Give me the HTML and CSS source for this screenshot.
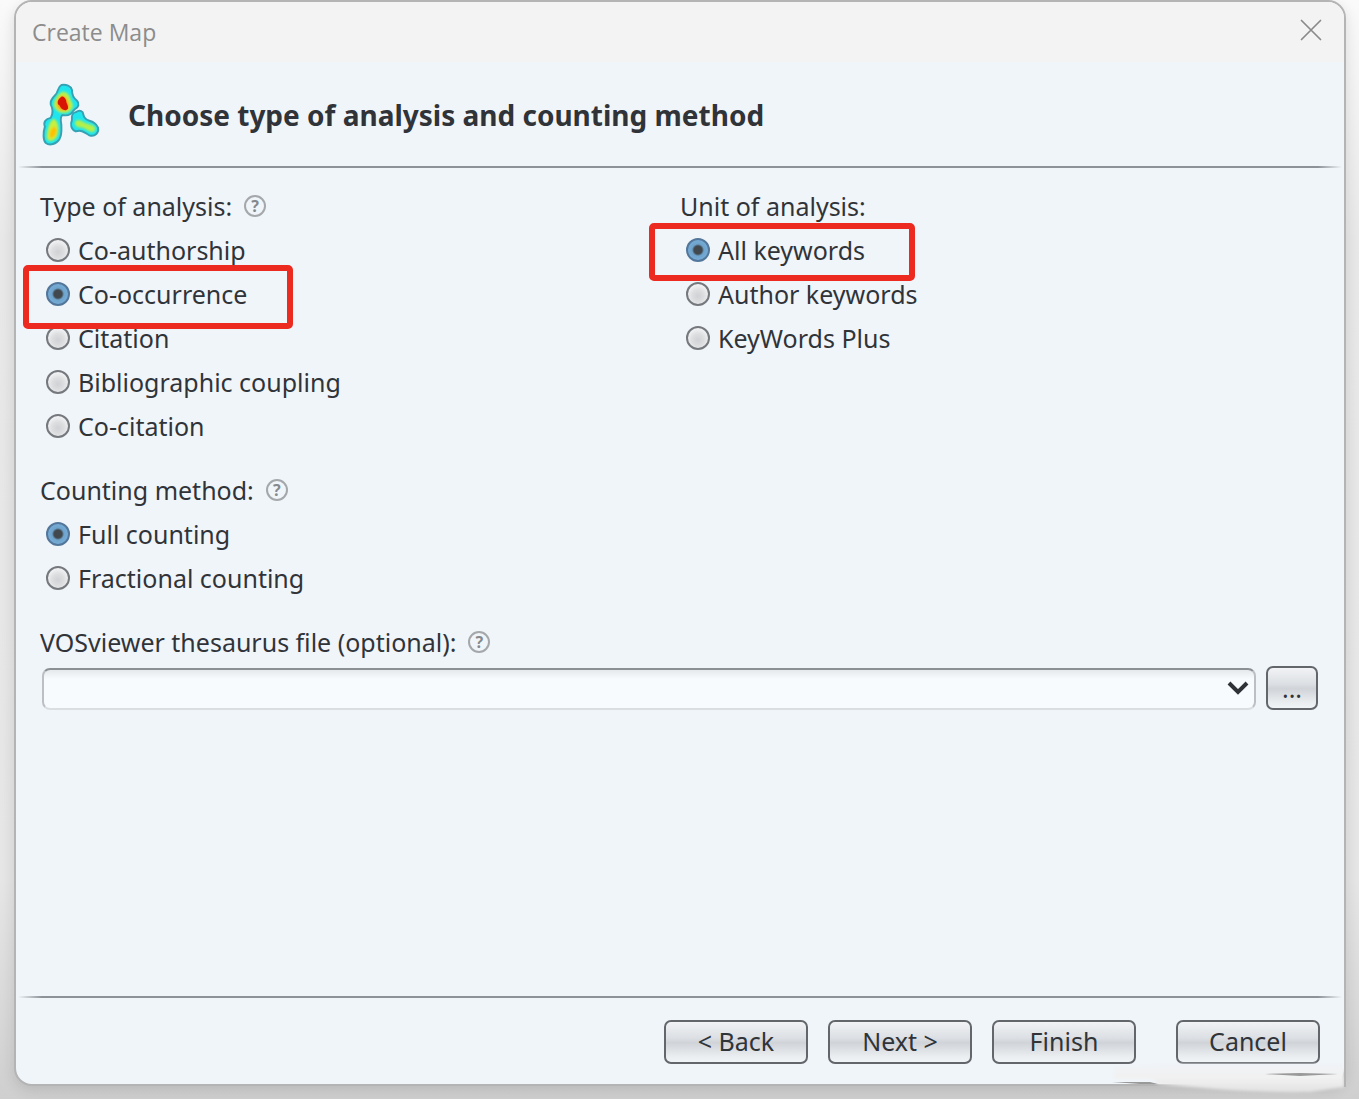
FILE: index.html
```html
<!DOCTYPE html>
<html lang="en">
<head>
    <meta charset="UTF-8">
    <title>Create Map</title>
    <link rel="stylesheet" href="styles.css">
</head>
<body>

    <form class="dialog">
        <div class="titlebar">
            <span class="titlebar__text">Create Map</span>
            <button class="titlebar__close" type="button" aria-label="Close">
                <svg width="22" height="22" viewBox="0 0 22 22" fill="none" stroke="#8a8a8a" stroke-width="1.7" stroke-linecap="round">
                    <path d="M1.5 1.5L20.5 20.5M20.5 1.5L1.5 20.5"/>
                </svg>
            </button>
        </div>

        <header class="header">
            <svg class="header__logo" width="58" height="66" viewBox="0 0 60 66">
                <defs>
                    <filter id="soft" x="-40%" y="-40%" width="180%" height="180%">
                        <feGaussianBlur stdDeviation="1"/>
                    </filter>
                </defs>
                <g fill="#1fe6ee" stroke="#35a2b4" stroke-width="2" stroke-linejoin="round">
                    <path d="M20 2C16 4 17 9 14 12C11 15 8 18 9 22C11 26 12 31 9 36C4 37 1 40 3 45C1 51 1 59 4 62C8 65 15 63 18 58C21 53 20 48 20 43C19 38 19 35 21 33C26 34 30 33 32 29L34 27C38 25 39 21 36 18C33 16 31 12 31 7C30 3 25 1 20 2Z"/>
                    <path d="M35 30C30 31 31 35 31 38C29 43 30 48 35 50C41 48 44 51 49 54C55 56 59 51 58 46C56 42 53 40 49 39C44 38 43 34 42 30C40 28 38 28 35 30Z"/>
                </g>
                <g filter="url(#soft)">
                    <path fill="#b9f04a" d="M21 9C16 11 12 19 12 23C14 29 20 33 27 30C33 27 33 22 30 18C29 13 26 8 21 9Z"/>
                    <path fill="#c8f03c" d="M12 37C7 40 5 50 5 57C7 62 14 60 16 54C18 48 17 39 12 37Z"/>
                    <path fill="#b5f04a" d="M35 39C32 43 36 46 41 46C46 47 49 52 54 50C58 45 52 43 47 42C43 41 39 36 35 39Z"/>
                    <path fill="#ffa000" d="M20 13C15 16 14 22 17 26C22 31 29 28 28 23C27 19 26 13 20 13Z"/>
                    <path fill="#ffc000" d="M10 47C7 51 7 57 10 57C15 55 16 49 14 45Z"/>
                </g>
                <path fill="#d81404" d="M20 14C16 17 15 21 18 23C20 28 25 30 27 26C27 22 25 21 25 18C24 15 22 13 20 14Z"/>
            </svg>
            <h1 class="header__title">Choose type of analysis and counting method</h1>
        </header>

        <main class="content">
            <div class="columns">
                <div class="columns__item">
                    <fieldset class="group">
                        <legend class="group__title">Type of analysis: <button class="help" type="button" aria-label="Help">?</button></legend>
                        <label class="option"><input class="option__radio" type="radio" name="type"> Co-authorship</label>
                        <label class="option option--marked-type"><input class="option__radio" type="radio" name="type" checked> Co-occurrence</label>
                        <label class="option"><input class="option__radio" type="radio" name="type"> Citation</label>
                        <label class="option"><input class="option__radio" type="radio" name="type"> Bibliographic coupling</label>
                        <label class="option"><input class="option__radio" type="radio" name="type"> Co-citation</label>
                    </fieldset>
                    <fieldset class="group">
                        <legend class="group__title">Counting method: <button class="help" type="button" aria-label="Help">?</button></legend>
                        <label class="option"><input class="option__radio" type="radio" name="counting" checked> Full counting</label>
                        <label class="option"><input class="option__radio" type="radio" name="counting"> Fractional counting</label>
                    </fieldset>
                </div>
                <fieldset class="group">
                    <legend class="group__title">Unit of analysis:</legend>
                    <label class="option option--marked-unit"><input class="option__radio" type="radio" name="unit" checked> All keywords</label>
                    <label class="option"><input class="option__radio" type="radio" name="unit"> Author keywords</label>
                    <label class="option"><input class="option__radio" type="radio" name="unit"> KeyWords Plus</label>
                </fieldset>
            </div>

            <div class="group__title">
                <label for="thesaurus">VOSviewer thesaurus file (optional):</label>
                <button class="help" type="button" aria-label="Help">?</button>
            </div>
            <div class="file">
                <div class="file__box">
                    <select class="file__select" id="thesaurus">
                        <option></option>
                    </select>
                    <svg class="file__arrow" width="22" height="16" viewBox="0 0 22 16" fill="none" stroke="#2f3337" stroke-width="4">
                        <path d="M2 3L11 12L20 3"/>
                    </svg>
                </div>
                <button class="button button--browse" type="button" aria-label="Browse">...</button>
            </div>
        </main>

        <footer class="footer">
            <button class="button" type="button">&lt; Back</button>
            <button class="button" type="button">Next &gt;</button>
            <button class="button" type="button">Finish</button>
            <button class="button button--cancel" type="button">Cancel</button>
        </footer>

        <svg class="smudge" width="240" height="36" viewBox="0 0 240 36">
            <defs>
                <linearGradient id="haze" x2="0" y2="1">
                    <stop offset="0" stop-color="#f0f3f6"/>
                    <stop offset=".5" stop-color="#f1f1f1"/>
                    <stop offset="1" stop-color="#e2e2e2"/>
                </linearGradient>
                <filter id="fade" x="-5%" y="-20%" width="110%" height="140%">
                    <feGaussianBlur stdDeviation="1.5"/>
                </filter>
            </defs>
            <path fill="url(#haze)" filter="url(#fade)" d="M4 6L60 3L234 3V26L200 31C150 32 100 28 48 23L42 18H4Z"/>
            <path fill="#999" d="M2 21L40 21L48 23L30 23ZM155 13L190 12L228 13L190 15Z"/>
            <path fill="none" stroke="#b4b4b4" stroke-width="2" d="M235 0V26"/>
        </svg>
    </form>

</body>
</html>
```
FILE: styles.css
```css
*,
*::before,
*::after {
    box-sizing: border-box;
}

body {
    background: linear-gradient(to bottom, #fafafa 0, #e8e8e8 240px, #e6e6e6 80%, #cfcfcf 100%);
    color: #303439;
    font-family: "Noto Sans", "Open Sans", sans-serif;
    font-size: 25px;
    margin: 0;
    min-height: 100vh;
    padding: 0 13px 13px 14px;
}

button,
select {
    color: inherit;
    font: inherit;
}

.dialog {
    background-color: #f0f5fa;
    border: 2px solid #b4b4b4;
    border-radius: 18px;
    box-shadow: 0 4px 14px rgba(0, 0, 0, 0.12);
    display: flex;
    flex-direction: column;
    min-height: calc(100vh - 13px);
    position: relative;
}

.titlebar {
    align-items: center;
    background-color: #f3f3f3;
    border-radius: 16px 16px 0 0;
    display: flex;
    height: 60px;
    justify-content: space-between;
    padding: 0 22px 0 16px;
}

.titlebar__text {
    color: #8c8c8c;
    font-family: "Open Sans", sans-serif;
    font-size: 23px;
}

.titlebar__close {
    background: none;
    border: 0;
    display: flex;
    padding: 0 0 4px;
}

.header {
    align-items: center;
    display: flex;
    gap: 28px;
    padding: 20px 26px 16px;
    position: relative;
}

.header::after,
.footer::before {
    background: linear-gradient(to right, transparent, #8d9298 24px, #8d9298 calc(100% - 24px), transparent);
    content: "";
    height: 2px;
    left: 2px;
    position: absolute;
    right: 2px;
}

.header::after {
    bottom: -4px;
}

.header__title {
    font-size: 28px;
    font-weight: 700;
    line-height: 36px;
    margin: 0;
}

.content {
    flex: 1;
    padding: 20px 24px;
}

.columns {
    display: grid;
    grid-template-columns: 1fr 1fr;
}

.group {
    border: 0;
    margin: 0 0 20px;
    min-width: 0;
    padding: 0;
}

.group__title {
    align-items: center;
    display: flex;
    gap: 12px;
    height: 44px;
    padding: 0;
}

.help {
    background: none;
    border: 2px solid #a5a8ab;
    border-radius: 50%;
    color: #85898c;
    font-size: 16px;
    font-weight: 700;
    height: 22px;
    line-height: 18px;
    padding: 0;
    width: 22px;
}

.option {
    align-items: center;
    display: flex;
    gap: 8px;
    height: 44px;
    padding-left: 6px;
    position: relative;
    width: fit-content;
}

.option__radio {
    appearance: none;
    background: radial-gradient(circle at 50% 60%, #cfd1d4 0, #dcdee0 6px, #f0f1f3 11px);
    border: 2px solid #75787c;
    border-radius: 50%;
    height: 24px;
    margin: 0;
    width: 24px;
}

.option__radio:checked {
    background: radial-gradient(circle, #41494f 0, #41494f 4px, #6ea3cc 6px, #78aed8 11px);
    border-color: #53779a;
}

/* red callout frames */
.option--marked-type::after,
.option--marked-unit::after {
    border: 6px solid #ec2a20;
    border-radius: 5px;
    content: "";
    pointer-events: none;
    position: absolute;
    z-index: 1;
}

.option--marked-type::after {
    height: 64px;
    left: -17px;
    top: -7px;
    width: 270px;
}

.option--marked-unit::after {
    height: 58px;
    left: -31px;
    top: -5px;
    width: 266px;
}

.file {
    display: flex;
    gap: 10px;
    padding: 2px 2px 0;
}

.file__box {
    flex: 1;
    padding-top: 2px;
    position: relative;
}

.file__select {
    appearance: none;
    background: linear-gradient(to bottom, #e6e9ec 0, #f8fbfe 9px);
    border: 2px solid #bcc0c4;
    border-bottom-color: #dbdee1;
    border-radius: 8px;
    border-top-color: #8b9095;
    display: block;
    height: 42px;
    padding: 0 40px 0 8px;
    width: 100%;
}

.file__arrow {
    pointer-events: none;
    position: absolute;
    right: 7px;
    top: 14px;
}

.button {
    background: linear-gradient(to bottom, #f1f3f5 0, #dcdfe3 40%, #d0d3d7 52%, #e9edf0 85%, #f1f4f6 100%);
    border: 2px solid #63676c;
    border-radius: 7px;
    height: 44px;
    line-height: 36px;
    padding: 0 0 2px;
    width: 144px;
}

.button--browse {
    padding: 0;
    width: 52px;
}

.button--cancel {
    margin-left: 20px;
}

.footer {
    display: flex;
    gap: 20px;
    justify-content: flex-end;
    padding: 22px 24px 20px;
    position: relative;
}

.footer::before {
    top: -2px;
}

.smudge {
    bottom: -13px;
    pointer-events: none;
    position: absolute;
    right: -6px;
}
```
